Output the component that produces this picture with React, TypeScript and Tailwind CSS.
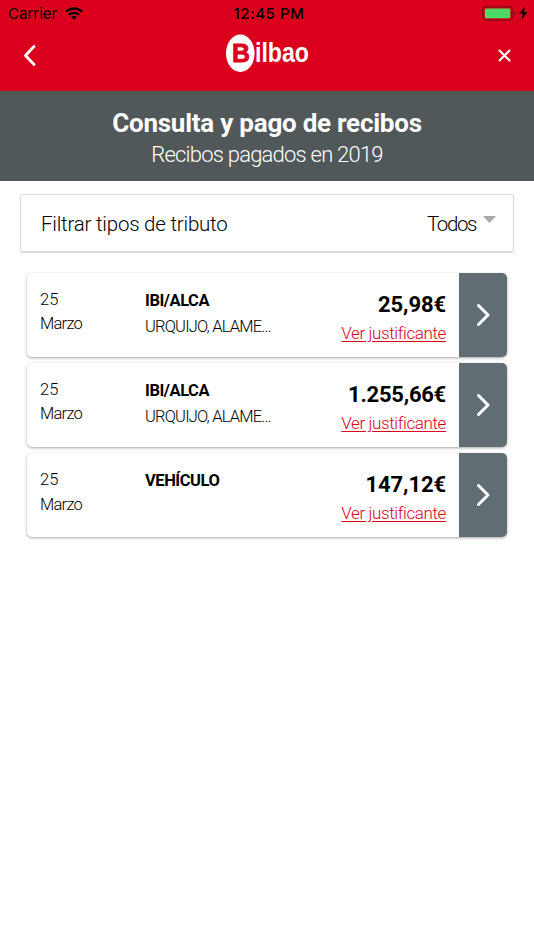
import React from 'react'

type Receipt = {
  day: string
  month: string
  type: string
  address?: string
  amount: string
  amountClass: string
}

const receipts: Receipt[] = [
  { day: '25', month: 'Marzo', type: 'IBI/ALCA', address: 'URQUIJO, ALAME...', amount: '25,98€', amountClass: 'tracking-[-0.1px]' },
  { day: '25', month: 'Marzo', type: 'IBI/ALCA', address: 'URQUIJO, ALAME...', amount: '1.255,66€', amountClass: 'tracking-[-0.25px]' },
  { day: '25', month: 'Marzo', type: 'VEHÍCULO', amount: '147,12€', amountClass: 'tracking-[-0.1px]' },
]

const StatusBar: React.FC = () => {
  return (
    <div className="grid h-7 grid-cols-3 items-center pl-2 pr-[6px] font-['Inter',sans-serif] text-[15px] text-black">
      <div className="flex items-center gap-2">
        <span>Carrier</span>
        <svg width="18" height="13" viewBox="0 0 18 13" fill="none" className="-mt-0.5">
          <path d="M1 4.7C5.5.4 12.5.4 17 4.7" stroke="#000" strokeWidth="2.3" />
          <path d="M3.9 7.8c2.9-2.7 7.3-2.7 10.2 0" stroke="#000" strokeWidth="2.2" />
          <path d="M9 12.8 6.2 10c1.6-1.4 4-1.4 5.6 0Z" fill="#000" />
        </svg>
      </div>
      <span className="whitespace-nowrap pl-0.5 text-center text-[15px] font-medium tracking-[0.55px]">12:45 PM</span>
      <div className="-mt-0.5 flex items-center justify-end gap-[3px]">
        <svg width="34" height="15" viewBox="0 0 34 15">
          <rect x="1" y="0.8" width="29" height="13.2" rx="3" fill="none" stroke="#8e0715" strokeWidth="1.5" />
          <rect x="2.8" y="2.5" width="25.5" height="9.8" rx="1.5" fill="#4cd964" />
          <path d="M31.8 5.2c1.9.8 1.9 3.8 0 4.6Z" fill="#8e0715" />
        </svg>
        <svg width="9" height="14" viewBox="0 0 9 14">
          <path d="M6 0.5 0.4 7.6h3.5L2.6 13.5 8.6 6H5Z" fill="#000" />
        </svg>
      </div>
    </div>
  )
}

const Logo: React.FC = () => {
  return (
    <svg width="92" height="40" viewBox="0 0 92 40" className="overflow-visible font-['Liberation_Sans',sans-serif] font-bold">
      <ellipse cx="14.3" cy="20.3" rx="14.3" ry="18.7" fill="#fff" />
      <text x="6" y="29" fontSize="26" textLength="18" lengthAdjust="spacingAndGlyphs" fill="#db001b" stroke="#db001b" strokeWidth="0.8">B</text>
      <text x="29" y="29" fontSize="27" textLength="54" lengthAdjust="spacingAndGlyphs" fill="#fff">ilbao</text>
    </svg>
  )
}

const Header: React.FC = () => {
  return (
    <header className="h-[91px] bg-[#db001b]">
      <StatusBar />
      <div className="flex h-[54px] items-center justify-between px-[23px]">
        <button aria-label="Volver">
          <svg width="13" height="21" viewBox="0 0 13 21" fill="none">
            <path d="M11 1.5 2.5 10.5 11 19.5" stroke="#fff" strokeWidth="2.8" strokeLinecap="round" strokeLinejoin="round" />
          </svg>
        </button>
        <div className="-mt-1 pl-[10px]">
          <Logo />
        </div>
        <button aria-label="Cerrar">
          <svg width="13" height="13" viewBox="0 0 13 13">
            <path d="m1.5 1.5 10 10m0-10-10 10" stroke="#fff" strokeWidth="2" strokeLinecap="round" />
          </svg>
        </button>
      </div>
    </header>
  )
}

const ReceiptCard: React.FC<{ receipt: Receipt }> = ({ receipt }) => {
  return (
    <div className="flex h-[84px] overflow-hidden rounded-[5px] bg-white shadow-[0_1px_3px_rgba(0,0,0,0.35)]">
      <div className="w-[117px] pl-[13px] pt-[15px] text-[16.5px] font-light leading-[24.5px]">
        <p>{receipt.day}</p>
        <p className="tracking-[-0.75px]">{receipt.month}</p>
      </div>
      <div className="w-[150px] whitespace-nowrap pl-px pt-[15px] leading-[26px]">
        <p className="text-[16.5px] font-bold tracking-[-0.45px]">{receipt.type}</p>
        <p className="text-[16.5px] font-light tracking-[-0.8px]">{receipt.address}</p>
      </div>
      <div className="flex-1 whitespace-nowrap pr-[13px] pt-[17px] text-right">
        <p className={`text-[22px] font-bold leading-[29px] ${receipt.amountClass}`}>{receipt.amount}</p>
        <a href="#" className="block text-[17px] font-light leading-[28px] tracking-[-0.38px] text-[#db001b] underline underline-offset-2">
          Ver justificante
        </a>
      </div>
      <button aria-label="Ver recibo" className="flex w-12 items-center justify-center bg-[#606e74]">
        <svg width="15" height="24" viewBox="0 0 15 24" fill="none">
          <path d="m2.5 2.5 9.5 9.5-9.5 9.5" stroke="#fff" strokeWidth="3" strokeLinecap="round" strokeLinejoin="round" />
        </svg>
      </button>
    </div>
  )
}

const App: React.FC = () => {
  return (
    <div className="min-h-screen bg-white font-['Roboto',sans-serif] text-black">
      <Header />
      <section className="h-[90px] bg-[#51585a] pt-[15px] text-center text-white">
        <h1 className="text-[26px] font-bold leading-[34px] tracking-[-0.24px]">Consulta y pago de recibos</h1>
        <h2 className="text-[22px] font-light leading-[29px] tracking-[-0.78px]">Recibos pagados en 2019</h2>
      </section>
      <main className="pt-[13px]">
        <div className="mx-5 flex h-[59px] items-center justify-between rounded-[3px] border border-b-2 border-[#d5dfe1] pl-5 pr-[17px] pt-[3px] text-[20.5px] font-light">
          <span className="tracking-[-0.22px]">Filtrar tipos de tributo</span>
          <button className="flex items-center gap-[7px]">
            <span className="tracking-[-1.4px]">Todos</span>
            <svg width="13" height="7" viewBox="0 0 13 7" className="mb-[11px]">
              <path d="M0 0h13L6.5 7Z" fill="#a9a9a9" />
            </svg>
          </button>
        </div>
        <div className="mx-[27px] mt-[19.5px] flex flex-col gap-[6.3px]">
          {receipts.map((receipt) => (
            <ReceiptCard key={receipt.amount} receipt={receipt} />
          ))}
        </div>
      </main>
    </div>
  )
}

export default App
